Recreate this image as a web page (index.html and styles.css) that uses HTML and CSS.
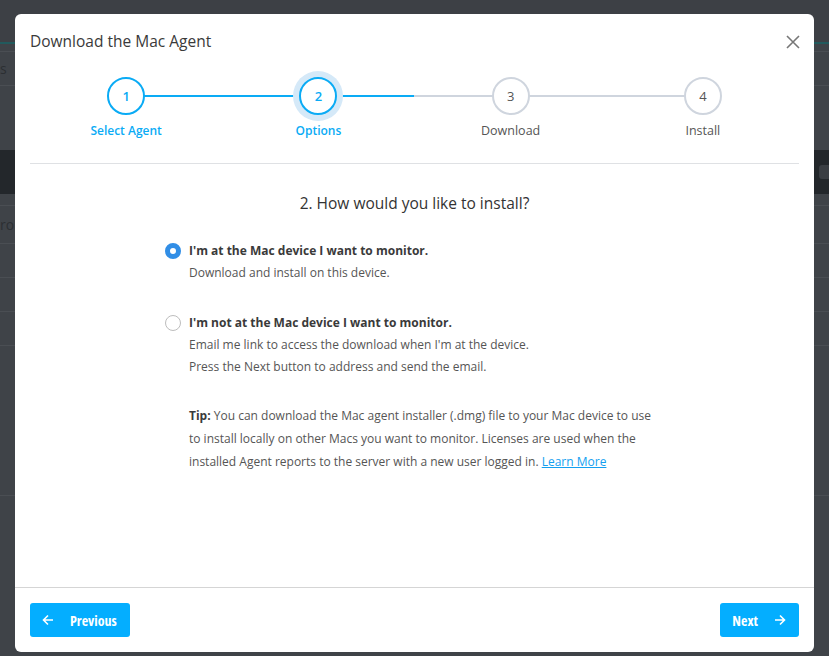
FILE: index.html
```html
<!DOCTYPE html>
<html lang="en">
<head>
  <meta charset="UTF-8">
  <meta name="viewport" content="width=device-width,initial-scale=1">
  <title>Download the Mac Agent</title>
  <link rel="stylesheet" href="styles.css">
</head>
<body>
  <!-- page behind the dialog -->
  <div class="page">
    <div class="topbar"></div>
    <div class="accent"></div>
    <div class="tabs"><span class="faint">s</span></div>
    <div class="spacer"></div>
    <div class="toolbar"><span class="tool-btn"></span></div>
    <div class="row short"></div>
    <div class="row first"><span class="faint">ro</span></div>
    <div class="row"></div>
    <div class="row"></div>
    <div class="row"></div>
    <div class="row tall"></div>
  </div>

  <div class="overlay">
    <div class="modal">
      <header class="modal-header">
        <h1>Download the Mac Agent</h1>
        <button class="close" aria-label="Close">
          <svg width="14" height="14" viewBox="0 0 14 14"><path d="M1 1L13 13M13 1L1 13" stroke="#777" stroke-width="1.6" fill="none"/></svg>
        </button>
      </header>

      <div class="modal-body">
        <!-- steps -->
        <ol class="steps">
          <li class="step done"><span class="num">1</span><span class="label">Select Agent</span></li>
          <li class="step current"><span class="num">2</span><span class="label">Options</span></li>
          <li class="step next-half"><span class="num">3</span><span class="label">Download</span></li>
          <li class="step"><span class="num">4</span><span class="label">Install</span></li>
        </ol>

        <div class="content">
          <h2>2. How would you like to install?</h2>

          <div class="options">
            <label class="option">
              <span class="radio checked"></span>
              <span class="option-text">
                <strong>I'm at the Mac device I want to monitor.</strong>
                <span class="desc">Download and install on this device.</span>
              </span>
            </label>

            <label class="option">
              <span class="radio"></span>
              <span class="option-text">
                <strong>I'm not at the Mac device I want to monitor.</strong>
                <span class="desc">Email me link to access the download when I'm at the device.</span>
                <span class="desc">Press the Next button to address and send the email.</span>
              </span>
            </label>

            <p class="tip"><strong>Tip:</strong> You can download the Mac agent installer (.dmg) file to your Mac device to use to install locally on other Macs you want to monitor. Licenses are used when the installed Agent reports to the server with a new user logged in. <a href="#">Learn More</a></p>
          </div>
        </div>
      </div>

      <footer class="modal-footer">
        <button class="btn">
          <svg width="12" height="12" viewBox="0 0 12 12"><path d="M11 6H1.5M6 1.5L1.5 6L6 10.5" stroke="#fff" stroke-width="1.6" fill="none"/></svg>
          Previous
        </button>
        <button class="btn">
          Next
          <svg width="12" height="12" viewBox="0 0 12 12"><path d="M1 6H10.5M6 1.5L10.5 6L6 10.5" stroke="#fff" stroke-width="1.6" fill="none"/></svg>
        </button>
      </footer>
    </div>
  </div>
</body>
</html>
```

FILE: styles.css
```css
html, body { margin: 0; padding: 0; }
body {
  width: 829px;
  height: 656px;
  overflow: hidden;
  background: #3f4348;
  font-family: "Open Sans", "Noto Sans", sans-serif;
  color: #333;
  position: relative;
}

/* background page */
.page { height: 656px; }
.topbar { height: 42px; background: #3d4045; }
.accent { height: 2px; background: #225a5d; }
.tabs { height: 33px; margin-top: 7px; border-top: 1px solid #4a4e53; border-bottom: 1px solid #4a4e53; display: flex; align-items: center; }
.faint { color: #2c2f33; font-size: 14px; padding-left: 0; }
.spacer { height: 64px; }
.toolbar { height: 44px; background: #23272b; position: relative; }
.tool-btn { position: absolute; right: -6px; top: 15px; width: 16px; height: 14px; border-radius: 3px; background: #3a3e43; }
.row { height: 33px; border-bottom: 1px solid #4a4e53; display: flex; align-items: center; }
.row.short { height: 11px; }
.row.first { height: 37px; }
.row.tall { height: 149px; }

/* dialog */
.overlay { position: absolute; inset: 0; }
.modal {
  position: absolute;
  left: 15px;
  top: 14px;
  width: 799px;
  height: 638px;
  background: #fff;
  border-radius: 6px;
  display: flex;
  flex-direction: column;
}
.modal-header { display: flex; justify-content: space-between; align-items: center; padding: 16px 14px 0 15px; }
.modal-header h1 { margin: 0; font-size: 15.5px; line-height: 22px; font-weight: 400; color: #3a3a3a; }
.close { border: none; background: none; padding: 0; width: 14px; height: 14px; cursor: pointer; display: flex; margin-top: 1px; }

.modal-body { flex: 1; padding: 0 15px; }

.steps {
  list-style: none;
  margin: 0;
  padding: 25px 0 23px;
  display: grid;
  grid-template-columns: repeat(4, 1fr);
  border-bottom: 1px solid #dfe1e4;
}
.step { display: flex; flex-direction: column; align-items: center; position: relative; }
.step + .step::before {
  content: "";
  position: absolute;
  top: 18px;
  left: -50%;
  width: 100%;
  height: 2px;
  background: #cfd5de;
}
.step.current::before { background: #0aabf5; }
.step.next-half::before { background: linear-gradient(to right, #0aabf5 50%, #cfd5de 50%); }
.num {
  width: 34px;
  height: 34px;
  border: 2px solid #cfd5de;
  border-radius: 50%;
  background: #fff;
  display: flex;
  align-items: center;
  justify-content: center;
  font-size: 13px;
  color: #555;
  position: relative;
  z-index: 1;
}
.label { margin-top: 7px; font-size: 12.5px; line-height: 18px; color: #555; }
.step.done .num, .step.current .num { border-color: #0aabf5; color: #0aabf5; font-weight: 600; }
.step.done .label, .step.current .label { color: #0aabf5; font-weight: 600; font-size: 12px; }
.step.current .num { box-shadow: 0 0 0 6px #d5e9f8; }

.content { padding-top: 28px; }
.content h2 { margin: 0; text-align: center; font-size: 15.5px; line-height: 22px; font-weight: 400; color: #333; }
.options { margin-top: 26px; padding-left: 135px; }
.option { display: flex; gap: 8px; margin-bottom: 28px; cursor: pointer; }
.radio {
  flex: none;
  width: 16px;
  height: 16px;
  border: 1px solid #bdbdbd;
  border-radius: 50%;
  box-sizing: border-box;
  margin-top: 3px;
  background: #fff;
}
.radio.checked { border: 5px solid #318ee6; }
.option-text { display: flex; flex-direction: column; font-size: 12px; line-height: 22px; }
.option-text strong { font-weight: 700; color: #3a3a3a; }
.desc { color: #555; }

.tip { margin: -2px 0 0 24px; width: 472px; font-size: 12px; line-height: 23px; color: #555; }
.tip strong { color: #3a3a3a; }
.tip a { color: #139ff0; }

.modal-footer {
  border-top: 1px solid #d5d5d5;
  padding: 15px;
  display: flex;
  justify-content: space-between;
}
.btn {
  height: 34px;
  padding: 0 13px 0 12px;
  border: none;
  border-radius: 3px;
  background: #04aeff;
  color: #fff;
  font-family: "Liberation Sans Narrow", "Open Sans", sans-serif;
  font-stretch: condensed;
  font-weight: 700;
  font-size: 14px;
  display: flex;
  align-items: center;
  gap: 16px;
  cursor: pointer;
}
```
